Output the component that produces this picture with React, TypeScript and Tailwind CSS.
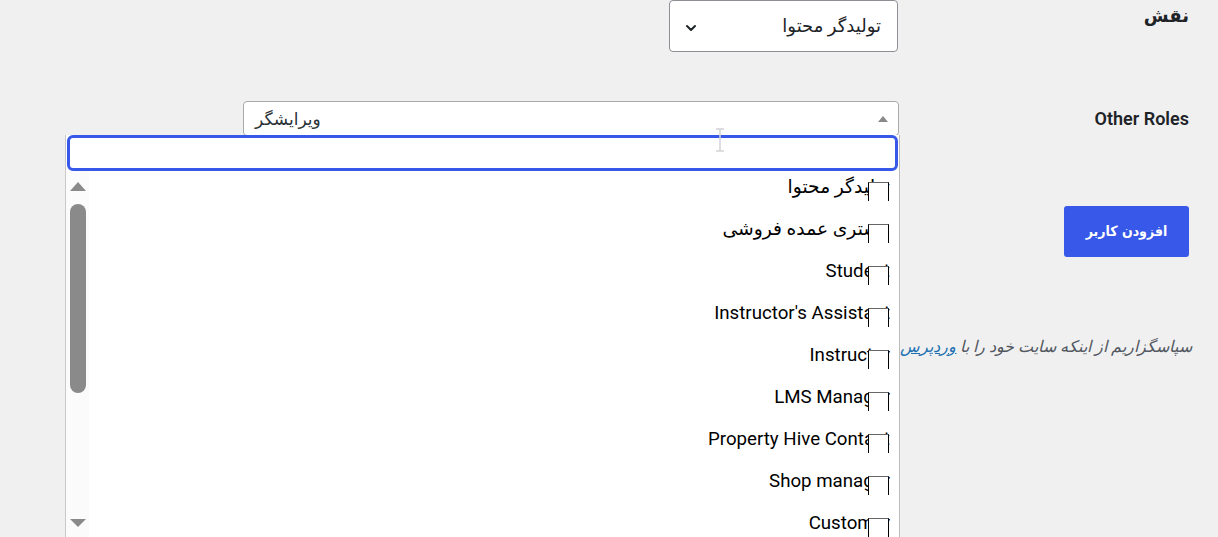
import React from "react";

const items = [
  "تولیدگر محتوا",
  "مشتری عمده فروشی",
  "Student",
  "Instructor's Assistant",
  "Instructor",
  "LMS Manager",
  "Property Hive Contact",
  "Shop manager",
  "Customer",
];

export default function App() {
  return (
    <div
      dir="rtl"
      className="relative w-[1218px] h-[537px] overflow-hidden bg-[#f0f0f1] text-[#1d2327]"
      style={{ fontFamily: 'Roboto, "DejaVu Sans", sans-serif' }}
    >
      <div className="pr-[29px]">
        {/* Row 1 */}
        <div className="flex items-start">
          <div className="w-[290px] pt-[4px] text-[18px] leading-[24px] font-bold">نقش</div>
          <div className="mr-[1px] w-[229px] h-[52px] bg-white border border-[#8c8f94] rounded-[4px] flex items-center justify-between pr-[16px] pl-[13px]">
            <span className="text-[18px] leading-[24px] text-[#1d2327]">تولیدگر محتوا</span>
            <svg width="16" height="16" viewBox="0 0 24 24" fill="none" stroke="#1d2327" strokeWidth="3" strokeLinecap="round" strokeLinejoin="round" className="mt-[4px]">
              <path d="M6 9l6 6 6-6" />
            </svg>
          </div>
        </div>
        {/* Row 2 */}
        <div className="flex items-center mt-[49px]">
          <div className="w-[290px] text-[18px] leading-[22px] font-semibold">Other Roles</div>
          <div dir="ltr" className="w-[656px] h-[35px] bg-white border border-[#aaaaaa] rounded-[4px] flex items-center justify-between pl-[11px] pr-[10px]">
            <span dir="rtl" className="text-[17px] leading-[24px] text-[#2c3338]">ویرایشگر</span>
            <svg width="10" height="6" viewBox="0 0 10 6"><path d="M0 6 L5 0 L10 6 Z" fill="#888" /></svg>
          </div>
        </div>
        {/* Button */}
        <div className="mt-[70px]">
          <button
            className="w-[125px] h-[51px] bg-[#3858e9] text-white rounded-[3px] text-[14px] font-bold"
            style={{ fontFamily: '"DejaVu Sans Condensed", "DejaVu Sans", sans-serif' }}
          >
            افزودن کاربر
          </button>
        </div>
        {/* Footer */}
        <p className="mt-[78px] mr-[-3px] text-[16px] leading-[24px] italic text-[#50575e] whitespace-nowrap">
          سپاسگزاریم از اینکه سایت خود را با <span className="text-[#2271b1] underline">وردپرس</span> ساخته‌اید.
        </p>
      </div>

      {/* Dropdown */}
      <div className="absolute left-[65px] top-[135px] w-[835px] h-[420px] bg-white border-l border-l-[#c9c9c9] border-r border-r-[#bcbcbc] flex flex-col">
        <div className="mx-[1px] h-[36px] border-[3px] border-[#3858e9] rounded-[6px] bg-white" />
        <div dir="ltr" className="flex flex-1">
          <div className="w-[23px] bg-[#fbfbfb] flex flex-col items-center pl-[1px]">
            <svg width="16" height="9" viewBox="0 0 16 9" className="mt-[11px]"><path d="M0 9 L8 0 L16 9 Z" fill="#8a8a8a" /></svg>
            <div className="mt-[13px] w-[16px] h-[189px] rounded-full bg-[#8a8a8a]" />
            <div className="h-[126px]" />
            <svg width="16" height="8" viewBox="0 0 16 8"><path d="M0 0 L16 0 L8 8 Z" fill="#8a8a8a" /></svg>
          </div>
          <div dir="rtl" className="flex-1 pr-[9px]">
            {items.map((t) => (
              <div key={t} className="relative h-[42px]">
                <div className="h-[32px] flex items-center text-[18.7px] text-black whitespace-nowrap">{t}</div>
                <div className="absolute right-[1px] top-[11px] w-[21px] h-[19px] bg-white border-l border-r border-l-black border-r-black border-t border-t-[#666]" />
              </div>
            ))}
          </div>
        </div>
      </div>

      {/* text cursor */}
      <svg className="absolute left-[714px] top-[128px]" width="12" height="24" viewBox="0 0 12 24">
        <path d="M2 1 H10 M6 1 V23 M2 23 H10" stroke="#d4d4d4" strokeWidth="1.5" fill="none" />
      </svg>
    </div>
  );
}
